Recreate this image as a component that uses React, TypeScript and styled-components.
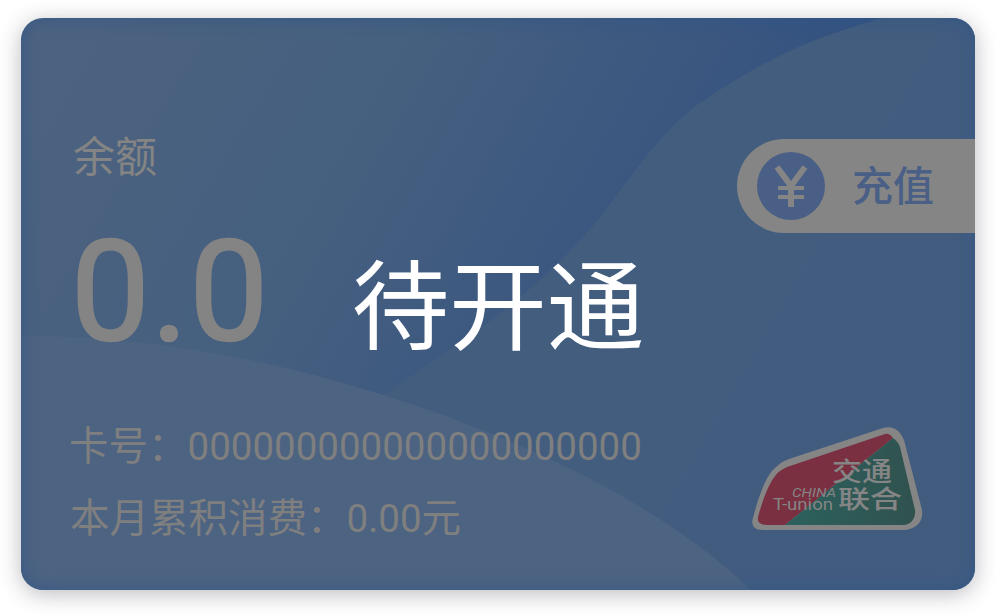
import React from 'react'
import styled, { createGlobalStyle } from 'styled-components'

const Global = createGlobalStyle`
  html, body { margin: 0; padding: 0; background: #fff; }
  body { width: 996px; height: 616px; overflow: hidden; font-family: "Roboto", "Noto Sans CJK SC", sans-serif; }
`

const Page = styled.div`
  width: 996px;
  height: 616px;
  padding: 18px 21px 26px;
  box-sizing: border-box;
`

const Card = styled.div`
  position: relative;
  width: 954px;
  height: 572px;
  border-radius: 22px;
  overflow: hidden;
  background: linear-gradient(120deg, #4d6280 0%, #46607f 30%, #3b5780 55%, #2b4d80 78%, #2b4d80 100%);
  box-shadow: 0 4px 22px rgba(40, 44, 60, 0.32);
  display: flex;
  flex-direction: column;
  justify-content: space-between;
`

const Waves = styled.svg`
  position: absolute;
  inset: 0;
`

const Vignette = styled.div`
  position: absolute;
  inset: 0;
  border-radius: 22px;
  box-shadow: inset 0 0 16px rgba(46, 86, 138, 0.75);
`

const TopRow = styled.div`
  position: relative;
  display: flex;
  justify-content: space-between;
  align-items: flex-start;
  padding: 112px 0 0 52px;
`

const Balance = styled.div`
  display: flex;
  flex-direction: column;
`

const BalanceLabel = styled.div`
  font-size: 42px;
  line-height: 56px;
  color: #848484;
`

const Amount = styled.div`
  margin: 31px 0 0 -2px;
  font-family: "Roboto", sans-serif;
  font-size: 140px;
  font-weight: 400;
  line-height: 150px;
  letter-spacing: 1.5px;
  color: #848484;
  -webkit-text-stroke: 2.5px #848484;
`

const Recharge = styled.div`
  margin-top: 9px;
  width: 238px;
  height: 94px;
  box-sizing: border-box;
  padding-left: 20px;
  border-radius: 47px 0 0 47px;
  background: #858585;
  display: flex;
  align-items: center;
  gap: 27px;
`

const YuanCircle = styled.div`
  width: 68px;
  height: 68px;
  border-radius: 50%;
  background: #4a5f85;
  display: flex;
  align-items: center;
  justify-content: center;
`

const RechargeLabel = styled.span`
  font-size: 41px;
  line-height: 41px;
  padding-top: 2px;
  font-weight: 500;
  color: #4a5f85;
`

const BottomRow = styled.div`
  position: relative;
  display: flex;
  justify-content: space-between;
  align-items: flex-end;
  padding: 0 52px 46px 48px;
`

const Info = styled.div`
  display: flex;
  flex-direction: column;
  gap: 22px;
`

const InfoLine = styled.div<{ $indent?: number }>`
  padding-left: ${p => p.$indent || 0}px;
  font-size: 39.5px;
  line-height: 50px;
  color: #7f7f7f;
  white-space: nowrap;
`

const Digits = styled.span`
  font-size: 38.5px;
`

const Logo = styled.svg`
  display: block;
  margin-bottom: 12px;
`

const Mask = styled.div`
  position: absolute;
  inset: 0;
  padding-bottom: 10px;
  display: flex;
  align-items: center;
  justify-content: center;
  font-size: 97.5px;
  color: #fff;
`

export default function App() {
  return (
    <Page>
      <Global />
      <Card>
        <Waves width="954" height="572" viewBox="0 0 954 572">
          <path d="M862 0 C780 22 730 50 679 85 C640 112 610 160 579 199 C550 235 520 262 492 285 C455 315 410 345 340 392 L300 572 L954 572 L954 0 Z" fill="#445e7e" fillOpacity="0.94" />
          <path d="M0 318 C130 316 280 345 430 400 C560 448 660 505 730 572 L0 572 Z" fill="#4d6382" />
        </Waves>
        <Vignette />
        <TopRow>
          <Balance>
            <BalanceLabel>余额</BalanceLabel>
            <Amount>0.0</Amount>
          </Balance>
          <Recharge>
            <YuanCircle>
              <svg width="34" height="42" viewBox="0 0 34 42" fill="none" stroke="#858585" strokeWidth="6">
                <path d="M3 2 L17 21 L31 2" />
                <path d="M17 19 V42" />
                <path d="M4 23 H30 M4 32 H30" strokeWidth="4" />
              </svg>
            </YuanCircle>
            <RechargeLabel>充值</RechargeLabel>
          </Recharge>
        </TopRow>
        <BottomRow>
          <Info>
            <InfoLine>卡号：<Digits>000000000000000000000</Digits></InfoLine>
            <InfoLine $indent={1}>本月累积消费：<Digits>0.00</Digits>元</InfoLine>
          </Info>
          <Logo width="172" height="106" viewBox="0 0 172 106">
            <defs>
              <linearGradient id="logoGreen" x1="0" y1="0" x2="1" y2="0">
                <stop offset="0" stopColor="#2c615d" />
                <stop offset="1" stopColor="#30524f" />
              </linearGradient>
            </defs>
            <path d="M2 92 C6 76 14 50 24 42 C28 38 32 35 38 33 L132 2 C142 -1 149 4 153 14 L171 84 C173 96 164 104 152 104 L12 104 C2 104 0 98 2 92 Z" fill="#858585" />
            <path d="M7 91 C11 76 19 52 29 45 C32 43 35 41 39 40 L134 8 C137 7 140 9 142 12 L34 99 L16 99 C9 99 6 96 7 91 Z" fill="#7a3040" />
            <path d="M142 12 C146 15 148 18 149 21 L164 84 C165 92 160 99 152 99 L34 99 Z" fill="url(#logoGreen)" />
            <text x="81" y="55" fontFamily="Noto Sans CJK SC" fontSize="26" fontWeight="500" fill="#858585" textLength="60" lengthAdjust="spacingAndGlyphs">交通</text>
            <text x="87" y="82" fontFamily="Noto Sans CJK SC" fontSize="25" fontWeight="500" fill="#858585" textLength="64" lengthAdjust="spacingAndGlyphs">联合</text>
            <text x="41" y="71" fontFamily="Roboto" fontSize="13" fontStyle="italic" fill="#858585" textLength="44" lengthAdjust="spacingAndGlyphs">CHINA</text>
            <text x="22" y="84" fontFamily="Roboto" fontSize="16" fill="#858585" textLength="60" lengthAdjust="spacingAndGlyphs">T-union</text>
          </Logo>
        </BottomRow>
        <Mask>待开通</Mask>
      </Card>
    </Page>
  )
}
